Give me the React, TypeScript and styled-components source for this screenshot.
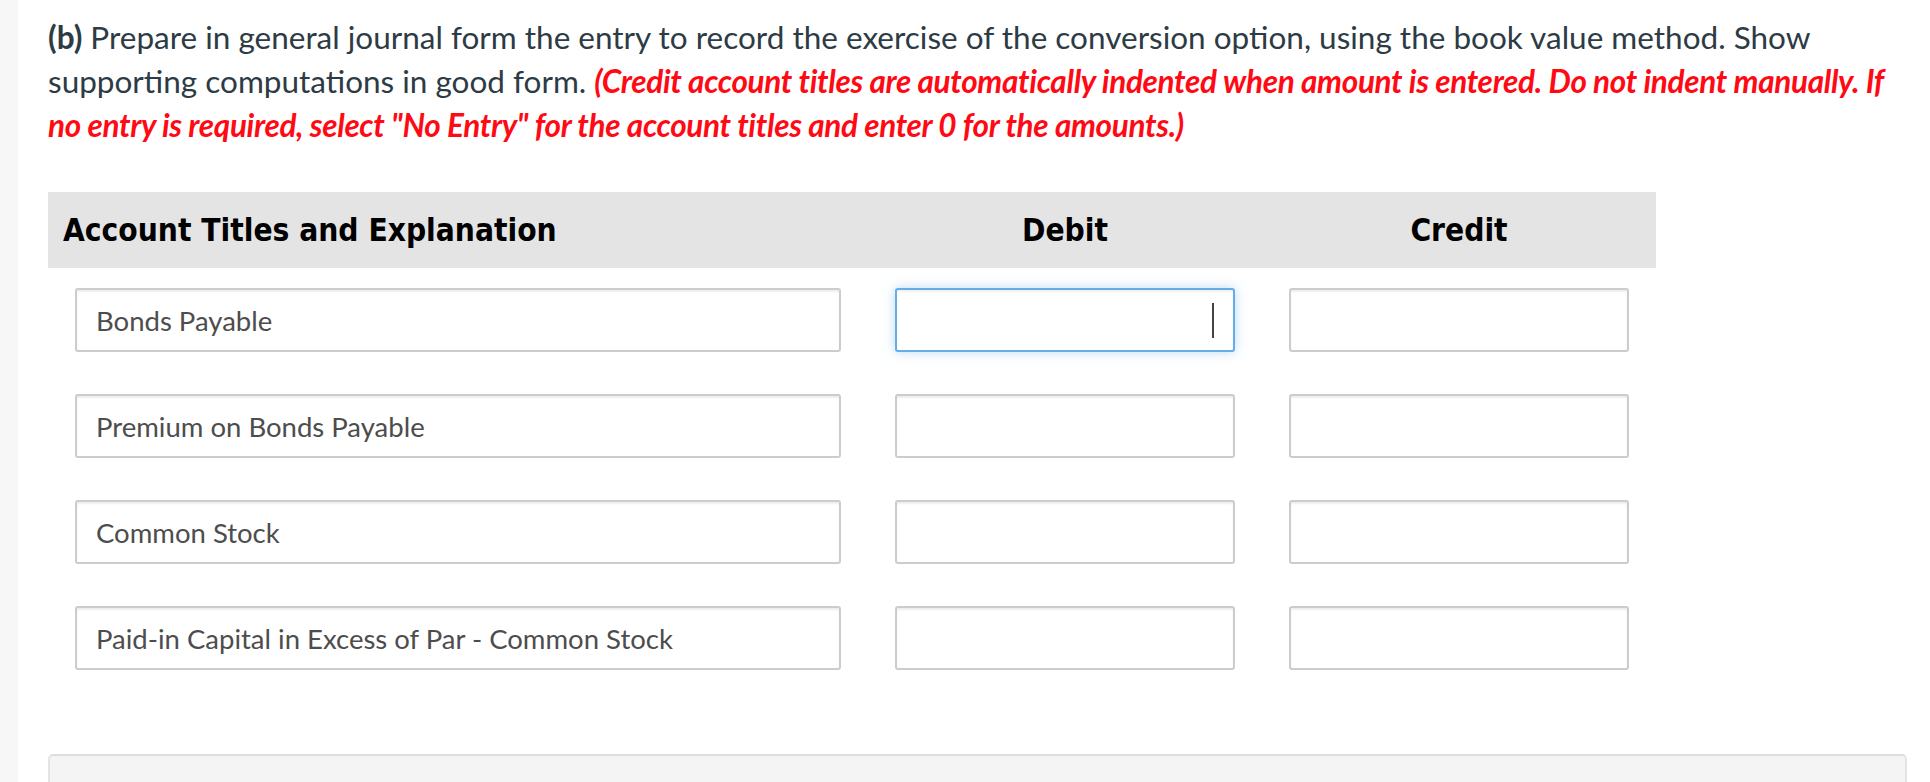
import React from "react";
import styled, { createGlobalStyle } from "styled-components";

const Global = createGlobalStyle`
  html, body { margin: 0; padding: 0; background: #ffffff; }
  body { font-family: Lato, "Open Sans", sans-serif; }
`;

const Page = styled.div`
  display: flex;
  min-height: 782px;
  height: 782px;
  overflow: hidden;
`;

const SideStrip = styled.div`
  width: 18px;
  flex: 0 0 18px;
  background: #f7f7f7;
`;

const Main = styled.main`
  flex: 1;
  padding: 15px 23px 0 30px;
  display: flex;
  flex-direction: column;
`;

const Prompt = styled.p`
  margin: 0;
  padding-right: 18px;
  font-family: Lato, sans-serif;
  font-size: 31.5px;
  line-height: 44px;
  color: #2d3b45;
`;

const Strong = styled.strong`
  font-weight: 700;
`;

const Warning = styled.em`
  font-weight: 700;
  font-style: italic;
  color: #ff0a14;
  letter-spacing: -0.33px;
`;

const Journal = styled.div`
  margin-top: 45px;
  width: 1608px;
  display: grid;
  grid-template-columns: 820px 394px 394px;
`;

const HeadCell = styled.div<{ $align: "left" | "center" }>`
  background: #e4e4e4;
  height: 76px;
  display: flex;
  align-items: center;
  justify-content: ${(p) => (p.$align === "left" ? "flex-start" : "center")};
  padding: 0 15px;
  font-family: "DejaVu Sans Condensed", "DejaVu Sans", Verdana, sans-serif;
  font-stretch: condensed;
  font-weight: 700;
  font-size: 31.4px;
  color: #000;
  box-sizing: border-box;
`;

const Cell = styled.div`
  padding: 20px 27px 22px;
  box-sizing: border-box;
`;

const FieldWrap = styled.div`
  position: relative;
`;

const Field = styled.input<{ $focused?: boolean; $right?: boolean }>`
  display: block;
  width: 100%;
  height: 64px;
  box-sizing: border-box;
  border: 2px solid ${(p) => (p.$focused ? "#66ace6" : "#cccccc")};
  border-radius: 3px;
  background: #fff;
  padding: 0 19px 0 19px;
  font-family: Lato, sans-serif;
  font-size: 27.5px;
  color: #4d4d4d;
  text-align: ${(p) => (p.$right ? "right" : "left")};
  outline: none;
  box-shadow: ${(p) =>
    p.$focused
      ? "inset 0 2px 2px rgba(0,0,0,0.06), 0 0 12px rgba(102,175,233,0.45)"
      : "inset 0 2px 2px rgba(0,0,0,0.07)"};
`;

const Caret = styled.span`
  position: absolute;
  right: 21px;
  top: 15px;
  width: 2px;
  height: 35px;
  background: #444;
`;

const Answer = styled.div`
  margin-top: 62px;
  height: 60px;
  background: #f4f4f4;
  border-top: 2px solid #dedede;
  border-left: 2px solid #e4e4e4;
  border-right: 2px solid #e4e4e4;
  border-radius: 5px 5px 0 0;
`;

const rows = [
  "Bonds Payable",
  "Premium on Bonds Payable",
  "Common Stock",
  "Paid-in Capital in Excess of Par - Common Stock",
];

export default function App() {
  return (
    <>
      <Global />
      <Page>
        <SideStrip />
        <Main>
          <Prompt>
            <Strong>(b)</Strong> Prepare in general journal form the entry to record the
            exercise of the conversion option, using the book value method. Show
            supporting computations in good form.{" "}
            <Warning>
              (Credit account titles are automatically indented when amount is entered.
              Do not indent manually. If no entry is required, select "No Entry" for the
              account titles and enter 0 for the amounts.)
            </Warning>
          </Prompt>
          <Journal>
            <HeadCell $align="left">Account Titles and Explanation</HeadCell>
            <HeadCell $align="center">Debit</HeadCell>
            <HeadCell $align="center">Credit</HeadCell>
            {rows.map((title, i) => (
              <React.Fragment key={title}>
                <Cell>
                  <Field readOnly defaultValue={title} />
                </Cell>
                <Cell>
                  <FieldWrap>
                    <Field readOnly $right $focused={i === 0} defaultValue="" />
                    {i === 0 && <Caret />}
                  </FieldWrap>
                </Cell>
                <Cell>
                  <Field readOnly $right defaultValue="" />
                </Cell>
              </React.Fragment>
            ))}
          </Journal>
          <Answer />
        </Main>
      </Page>
    </>
  );
}
